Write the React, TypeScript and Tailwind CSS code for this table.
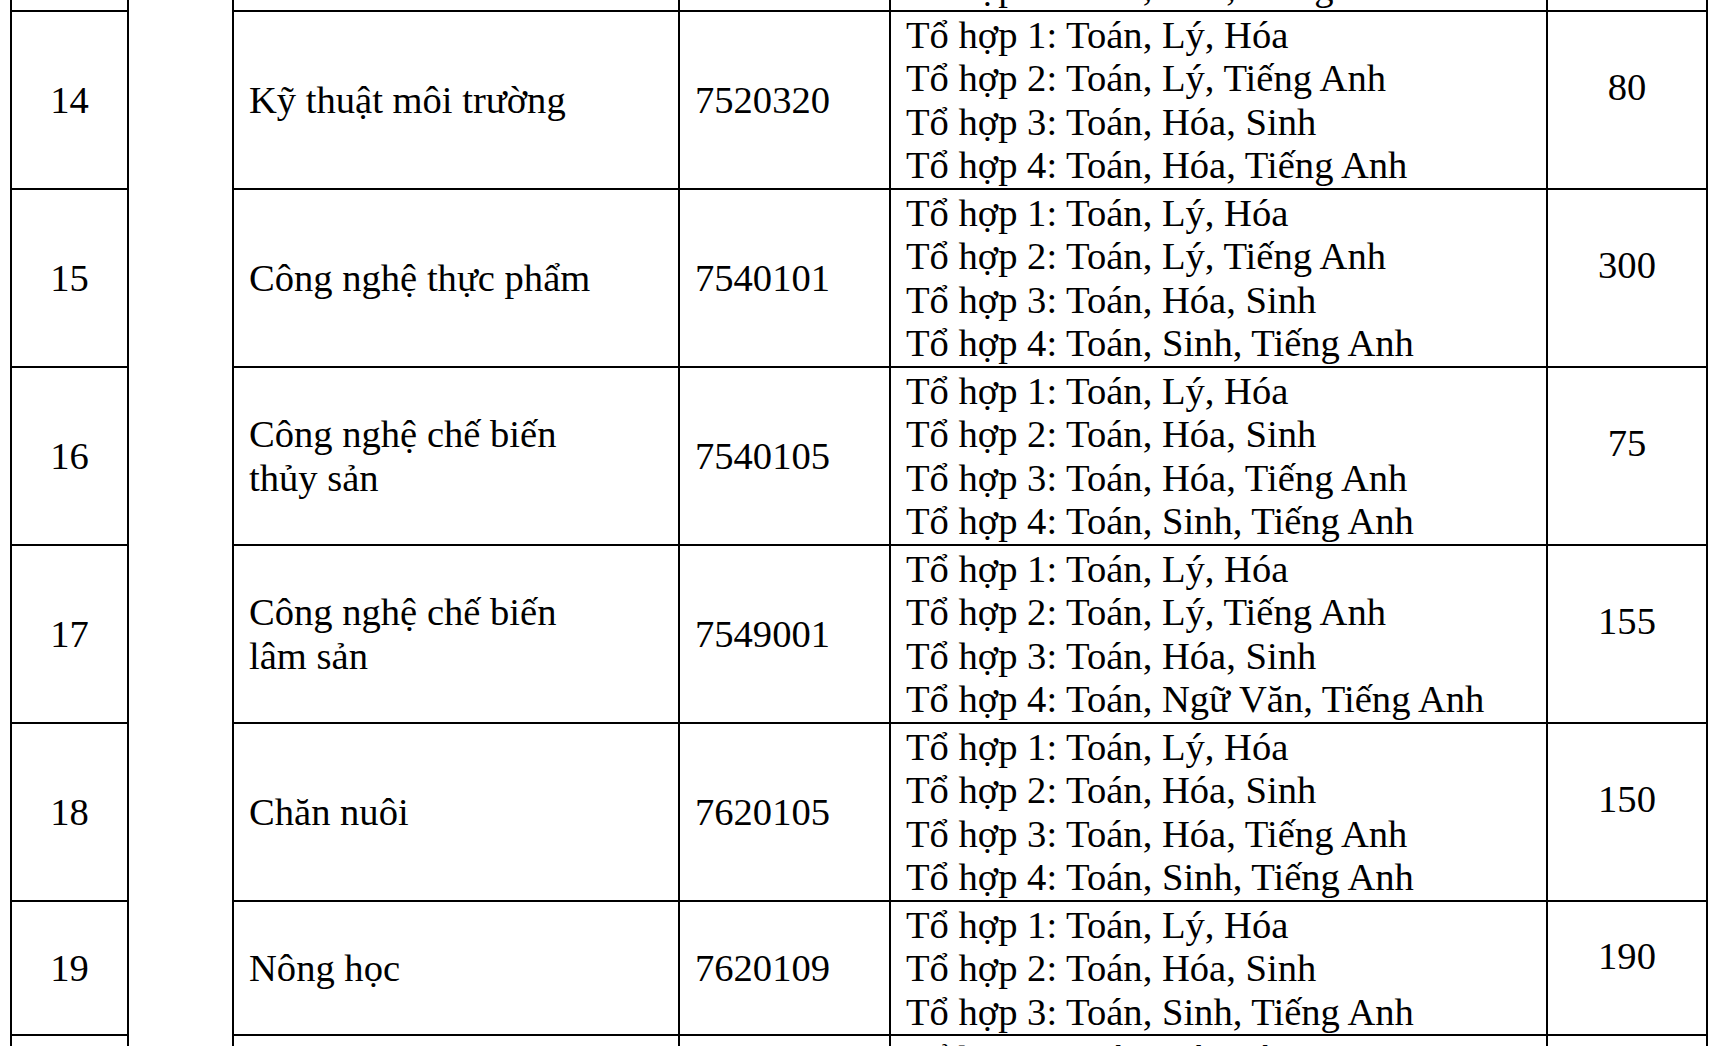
const ROWS = [
  {
    stt: "13",
    name: ["Kỹ thuật xây dựng"],
    code: "7580201",
    combos: [
      "Tổ hợp 1: Toán, Lý, Hóa",
      "Tổ hợp 2: Toán, Lý, Tiếng Anh",
      "Tổ hợp 3: Toán, Hóa, Tiếng Anh",
    ],
    quota: "100",
  },
  {
    stt: "14",
    name: ["Kỹ thuật môi trường"],
    code: "7520320",
    combos: [
      "Tổ hợp 1: Toán, Lý, Hóa",
      "Tổ hợp 2: Toán, Lý, Tiếng Anh",
      "Tổ hợp 3: Toán, Hóa, Sinh",
      "Tổ hợp 4: Toán, Hóa, Tiếng Anh",
    ],
    quota: "80",
  },
  {
    stt: "15",
    name: ["Công nghệ thực phẩm"],
    code: "7540101",
    combos: [
      "Tổ hợp 1: Toán, Lý, Hóa",
      "Tổ hợp 2: Toán, Lý, Tiếng Anh",
      "Tổ hợp 3: Toán, Hóa, Sinh",
      "Tổ hợp 4: Toán, Sinh, Tiếng Anh",
    ],
    quota: "300",
  },
  {
    stt: "16",
    name: ["Công nghệ chế biến", "thủy sản"],
    code: "7540105",
    combos: [
      "Tổ hợp 1: Toán, Lý, Hóa",
      "Tổ hợp 2: Toán, Hóa, Sinh",
      "Tổ hợp 3: Toán, Hóa, Tiếng Anh",
      "Tổ hợp 4: Toán, Sinh, Tiếng Anh",
    ],
    quota: "75",
  },
  {
    stt: "17",
    name: ["Công nghệ chế biến", "lâm sản"],
    code: "7549001",
    combos: [
      "Tổ hợp 1: Toán, Lý, Hóa",
      "Tổ hợp 2: Toán, Lý, Tiếng Anh",
      "Tổ hợp 3: Toán, Hóa, Sinh",
      "Tổ hợp 4: Toán, Ngữ Văn, Tiếng Anh",
    ],
    quota: "155",
  },
  {
    stt: "18",
    name: ["Chăn nuôi"],
    code: "7620105",
    combos: [
      "Tổ hợp 1: Toán, Lý, Hóa",
      "Tổ hợp 2: Toán, Hóa, Sinh",
      "Tổ hợp 3: Toán, Hóa, Tiếng Anh",
      "Tổ hợp 4: Toán, Sinh, Tiếng Anh",
    ],
    quota: "150",
  },
  {
    stt: "19",
    name: ["Nông học"],
    code: "7620109",
    combos: [
      "Tổ hợp 1: Toán, Lý, Hóa",
      "Tổ hợp 2: Toán, Hóa, Sinh",
      "Tổ hợp 3: Toán, Sinh, Tiếng Anh",
    ],
    quota: "190",
  },
  {
    stt: "20",
    name: ["Khoa học cây trồng"],
    code: "7620110",
    combos: [
      "Tổ hợp 1: Toán, Lý, Hóa",
      "Tổ hợp 2: Toán, Hóa, Sinh",
      "Tổ hợp 3: Toán, Sinh, Tiếng Anh",
    ],
    quota: "120",
  },
]

const cell = "border-2 border-black px-[15px] pt-[2px] align-middle"

export default function App() {
  return (
    <div
      className="h-[1046px] w-[1712px] overflow-hidden bg-white text-black"
      style={{ fontFamily: '"Liberation Serif", "Times New Roman", serif' }}
    >
      <table className="ml-[10px] mt-[-125px] w-[1698px] table-fixed border-collapse text-[38.6px] leading-[43.5px]">
        <colgroup>
          <col className="w-[117px]" />
          <col className="w-[105px]" />
          <col className="w-[446px]" />
          <col className="w-[211px]" />
          <col className="w-[657px]" />
          <col className="w-[160px]" />
        </colgroup>
        <tbody>
          {ROWS.map((row, i) => (
            <tr key={row.stt}>
              <td className={`${cell} pb-0 text-center`}>{row.stt}</td>
              {i === 0 && <td rowSpan={ROWS.length} className={cell} />}
              <td className={`${cell} pb-0 text-left`}>
                {row.name.map((line) => (
                  <div key={line}>{line}</div>
                ))}
              </td>
              <td className={`${cell} pb-0 text-left`}>{row.code}</td>
              <td className={`${cell} pb-0 text-left whitespace-nowrap`}>
                {row.combos.map((c) => (
                  <div key={c}>{c}</div>
                ))}
              </td>
              <td className={`${cell} pb-[25px] text-center`}>{row.quota}</td>
            </tr>
          ))}
        </tbody>
      </table>
    </div>
  )
}
